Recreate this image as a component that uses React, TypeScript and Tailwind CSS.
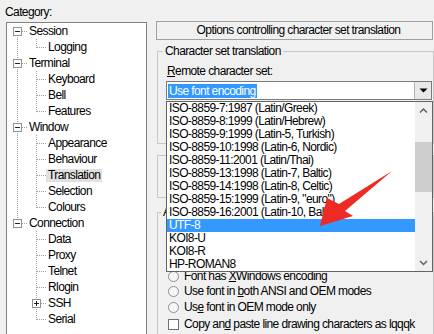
import React from 'react';

const tree: { t: string; lvl: number; sel?: boolean }[] = [
  { t: 'Session', lvl: 0 },
  { t: 'Logging', lvl: 1 },
  { t: 'Terminal', lvl: 0 },
  { t: 'Keyboard', lvl: 1 },
  { t: 'Bell', lvl: 1 },
  { t: 'Features', lvl: 1 },
  { t: 'Window', lvl: 0 },
  { t: 'Appearance', lvl: 1 },
  { t: 'Behaviour', lvl: 1 },
  { t: 'Translation', lvl: 1, sel: true },
  { t: 'Selection', lvl: 1 },
  { t: 'Colours', lvl: 1 },
  { t: 'Connection', lvl: 0 },
  { t: 'Data', lvl: 1 },
  { t: 'Proxy', lvl: 1 },
  { t: 'Telnet', lvl: 1 },
  { t: 'Rlogin', lvl: 1 },
  { t: 'SSH', lvl: 1 },
  { t: 'Serial', lvl: 1 },
];

const charsets = [
  'ISO-8859-7:1987 (Latin/Greek)',
  'ISO-8859-8:1999 (Latin/Hebrew)',
  'ISO-8859-9:1999 (Latin-5, Turkish)',
  'ISO-8859-10:1998 (Latin-6, Nordic)',
  'ISO-8859-11:2001 (Latin/Thai)',
  'ISO-8859-13:1998 (Latin-7, Baltic)',
  'ISO-8859-14:1998 (Latin-8, Celtic)',
  'ISO-8859-15:1999 (Latin-9, "euro")',
  'ISO-8859-16:2001 (Latin-10, Balkan)',
  'UTF-8',
  'KOI8-U',
  'KOI8-R',
  'HP-ROMAN8',
];

const cy = (i: number) => 8 + 16 * i;

function TreeLines() {
  const tops = [0, 2, 6, 12];
  const groups = [
    [0, 1, 1],
    [2, 3, 5],
    [6, 7, 11],
    [12, 13, 18],
  ];
  return (
    <svg className="absolute left-0 top-0" width="139" height="328">
      <g stroke="#a0a0a0" strokeWidth="1" strokeDasharray="1 1" fill="none">
        <line x1="10.5" y1={cy(0)} x2="10.5" y2={cy(12)} />
        {tops.map((i) => (
          <line key={i} x1="15" y1={cy(i) + 0.5} x2="21" y2={cy(i) + 0.5} />
        ))}
        {groups.map(([p, a, b]) => (
          <g key={p}>
            <line x1="29.5" y1={16 + 16 * p} x2="29.5" y2={cy(b) + 1} />
            {Array.from({ length: b - a + 1 }, (_, k) => a + k).map((i) => (
              <line key={i} x1={i === 17 ? 34 : 30} y1={cy(i) + 0.5} x2="40" y2={cy(i) + 0.5} />
            ))}
          </g>
        ))}
      </g>
      {tops.map((i) => (
        <g key={i}>
          <rect x="6.5" y={cy(i) - 3.5} width="8" height="8" fill="#fff" stroke="#919191" />
          <line x1="8" y1={cy(i) + 0.5} x2="13" y2={cy(i) + 0.5} stroke="#222" />
        </g>
      ))}
      <rect x="25.5" y={cy(17) - 3.5} width="8" height="8" fill="#fff" stroke="#919191" />
      <line x1="27" y1={cy(17) + 0.5} x2="32" y2={cy(17) + 0.5} stroke="#222" />
      <line x1="29.5" y1={cy(17) - 2} x2="29.5" y2={cy(17) + 3} stroke="#222" />
    </svg>
  );
}

function Chevron({ up }: { up?: boolean }) {
  return (
    <svg width="17" height="17">
      <polyline
        points={up ? '5,10.5 8.5,7 12,10.5' : '5,7 8.5,10.5 12,7'}
        fill="none"
        stroke="#606060"
        strokeWidth="1.5"
      />
    </svg>
  );
}

function Radio({ label }: { label: React.ReactNode }) {
  return (
    <div className="flex items-center h-full">
      <span className="shrink-0 ml-[10px] mr-[5px] w-[11px] h-[11px] rounded-full border border-[#8e8f8f] bg-[#f7f7f7]" />
      <span className="leading-[13px]">{label}</span>
    </div>
  );
}

export default function App() {
  return (
    <div className="relative flex w-[434px] h-[334px] overflow-hidden bg-[#f0f0f0] text-black text-[12px] tracking-[-0.6px] font-['Liberation_Sans',Arial,sans-serif]">
      <div className="w-[156px] shrink-0 pl-[5px]">
        <div className="mt-[6px] h-[13px] leading-[13px]">Category:</div>
        <div className="relative mt-[3px] ml-[1px] w-[141px] h-[330px] bg-white border border-[#828282]">
          <TreeLines />
          <div className="relative">
            {tree.map((r) => (
              <div
                key={r.t}
                className={`flex items-center h-[16px] whitespace-nowrap ${
                  r.lvl === 0 ? 'pl-[22px]' : r.sel ? 'pl-[39px]' : 'pl-[41px]'
                }`}
              >
                {r.sel ? (
                  <span className="px-[2px] h-[13px] leading-[13px] bg-[#e0e0e0]">{r.t}</span>
                ) : (
                  <span className="leading-[13px]">{r.t}</span>
                )}
              </div>
            ))}
          </div>
        </div>
      </div>

      <div className="w-[278px] shrink-0">
        <div className="mt-[21px] w-[277px] h-[19px] border border-[#a0a0a0] flex items-center justify-center pl-[8px] leading-[13px] whitespace-nowrap">
          Options controlling character set translation
        </div>

        <div className="mt-[11px] ml-[1px] w-[277px] h-[93px] border border-[#c8c8c8]">
          <div className="-mt-[7px] ml-[5px] w-fit px-[2px] bg-[#f0f0f0] leading-[13px]">
            Character set translation
          </div>
          <div className="mt-[7px] ml-[9px] leading-[13px]">
            <u>R</u>emote character set:
          </div>
          <div className="mt-[3px] ml-[8px] w-[266px] h-[19px] flex border border-[#7a7a7a] bg-white">
            <div className="flex-1 flex items-center pl-[1px]">
              <span className="px-[1px] h-[14px] leading-[14px] bg-[#3399ff] text-white">
                Use font encoding
              </span>
            </div>
            <div className="w-[17px] h-full flex items-center justify-center bg-[#e8e8e8] border-l border-[#b4b4b4]">
              <svg width="9" height="5">
                <polygon points="0.5,0.5 8.5,0.5 4.5,4.5" fill="#000" />
              </svg>
            </div>
          </div>
        </div>

        <div className="mt-[11px] ml-[1px] w-[277px] h-[43px] border border-[#c8c8c8]" />

        <div className="mt-[14px] ml-[1px] w-[277px] h-[140px] border border-[#c8c8c8]">
          <div className="-mt-[7px] ml-[3px] w-fit px-[2px] bg-[#f0f0f0] leading-[13px] whitespace-nowrap">
            Adjust how PuTTY handles line drawing characters
          </div>
          <div className="pt-[2px] whitespace-nowrap">
            <div className="h-[16px] flex items-center pl-[9px] leading-[13px]">
              Handling of line drawing characters:
            </div>
            <div className="h-[16px]">
              <Radio label="Use Unicode line drawing code points" />
            </div>
            <div className="h-[16px]">
              <Radio label="Poor man's line drawing (+, - and |)" />
            </div>
            <div className="h-[15px]">
              <Radio label={<>Font has <u>X</u>Windows encoding</>} />
            </div>
            <div className="h-[15px]">
              <Radio label={<>Use font in <u>b</u>oth ANSI and OEM modes</>} />
            </div>
            <div className="h-[16px]">
              <Radio label={<>Us<u>e</u> font in OEM mode only</>} />
            </div>
            <div className="h-[18px] flex items-center">
              <span className="shrink-0 ml-[10px] mr-[5px] w-[11px] h-[11px] border border-[#707070] bg-white" />
              <span className="leading-[13px]">
                Copy an<u>d</u> paste line drawing characters as lqqqk
              </span>
            </div>
          </div>
        </div>
      </div>

      {/* dropdown popup of the combo box */}
      <div className="absolute left-[166px] top-[101px] w-[267px] h-[171px] flex border border-[#646464] bg-white">
        <div className="w-[248px]">
          {charsets.map((c) => (
            <div
              key={c}
              className={`h-[13px] leading-[13px] pl-[2px] whitespace-nowrap overflow-hidden ${
                c === 'UTF-8' ? 'bg-[#3399ff] text-white' : ''
              }`}
            >
              {c}
            </div>
          ))}
        </div>
        <div className="w-[17px] flex flex-col bg-[#f0f0f0]">
          <Chevron up />
          <div className="flex-1">
            <div className="mt-[23px] h-[50px] bg-[#cdcdcd]" />
          </div>
          <Chevron />
        </div>
      </div>

      <svg className="absolute left-0 top-0 pointer-events-none" width="434" height="334">
        <polygon
          points="320,226 327,198 339,204 392,171 345,211 353,216"
          fill="#ee2a24"
        />
      </svg>
    </div>
  );
}
